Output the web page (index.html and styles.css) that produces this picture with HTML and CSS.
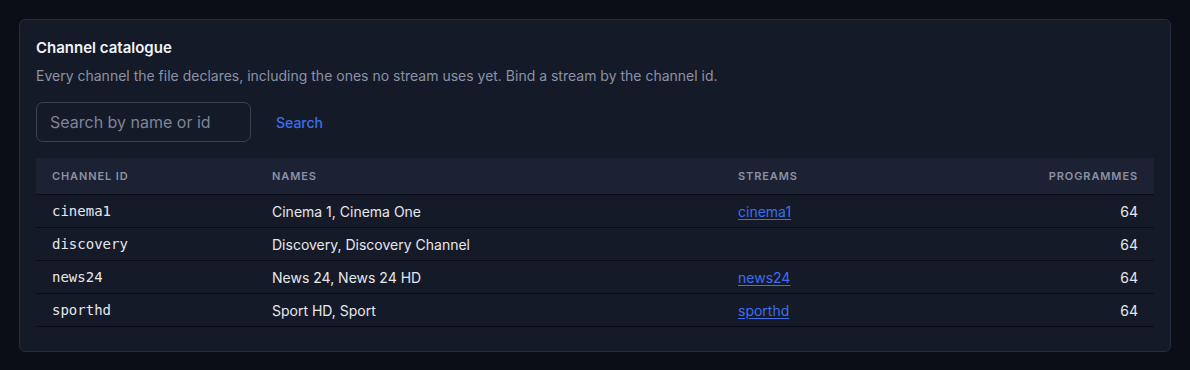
FILE: index.html
```html
<!DOCTYPE html>
<html>
<head>
<meta charset="utf-8">
<link rel="stylesheet" href="styles.css">
</head>
<body>
<section class="card">
  <h2 class="title">Channel catalogue</h2>
  <p class="desc">Every channel the file declares, including the ones no stream uses yet. Bind a stream by the channel id.</p>
  <form class="search">
    <input class="search-input" type="text" placeholder="Search by name or id">
    <button class="search-btn" type="button">Search</button>
  </form>
  <table class="tbl">
    <thead>
      <tr>
        <th class="c-id">Channel ID</th>
        <th class="c-names">Names</th>
        <th class="c-streams">Streams</th>
        <th class="c-prog">Programmes</th>
      </tr>
    </thead>
    <tbody>
      <tr><td class="mono">cinema1</td><td>Cinema 1, Cinema One</td><td><a href="#">cinema1</a></td><td class="num">64</td></tr>
      <tr><td class="mono">discovery</td><td>Discovery, Discovery Channel</td><td></td><td class="num">64</td></tr>
      <tr><td class="mono">news24</td><td>News 24, News 24 HD</td><td><a href="#">news24</a></td><td class="num">64</td></tr>
      <tr><td class="mono">sporthd</td><td>Sport HD, Sport</td><td><a href="#">sporthd</a></td><td class="num">64</td></tr>
    </tbody>
  </table>
</section>
</body>
</html>
```
FILE: styles.css
```css
html, body {
  margin: 0;
  background: #0b0e17;
}
body {
  padding: 19px 19px 0 19px;
  font-family: Inter, "Noto Sans", sans-serif;
  color: #e5e7eb;
}
.card {
  background: #151a29;
  border: 1px solid #262c3b;
  border-radius: 6px;
  padding: 16px 16px 24px 16px;
}
.title {
  margin: 0;
  font-size: 15px;
  font-weight: 600;
  line-height: 24px;
  color: #f1f3f7;
}
.desc {
  margin: 6px 0 0 0;
  font-size: 14px;
  line-height: 20px;
  color: #8b92a5;
}
.search {
  margin: 16px 0 16px 0;
  display: flex;
  align-items: center;
  gap: 10px;
}
.search-input {
  box-sizing: border-box;
  width: 215px;
  height: 40px;
  background: #151a29;
  border: 1px solid #3a4050;
  border-radius: 7px;
  padding: 0 13px;
  font-family: Inter, sans-serif;
  font-size: 16px;
  color: #e5e7eb;
  outline: none;
}
.search-input::placeholder {
  color: #7d8497;
}
.search-btn {
  background: none;
  border: none;
  padding: 0 15px;
  font-family: Inter, sans-serif;
  font-size: 14px;
  font-weight: 500;
  color: #3b6ff0;
  height: 40px;
}
.tbl {
  width: 100%;
  border-collapse: collapse;
  font-size: 14px;
}
.tbl th {
  background: #1c2234;
  font-size: 11px;
  font-weight: 600;
  letter-spacing: 0.9px;
  text-transform: uppercase;
  color: #8a92a4;
  text-align: left;
  height: 36px;
  padding: 0 16px;
  border-bottom: 1px solid #0a0d15;
}
.tbl td {
  height: 32px;
  padding: 0 16px;
  border-bottom: 1px solid #0a0d15;
  color: #e5e7eb;
}
.c-id { width: 188px; }
.c-names { width: 434px; }
.tbl th.c-prog, .tbl td.num { text-align: right; }
.mono {
  font-family: "DejaVu Sans Mono", monospace;
  font-size: 14px;
  color: #e5e7eb;
}
.tbl a {
  color: #3b6ff0;
  text-decoration: underline;
  text-underline-offset: 2px;
}
```
